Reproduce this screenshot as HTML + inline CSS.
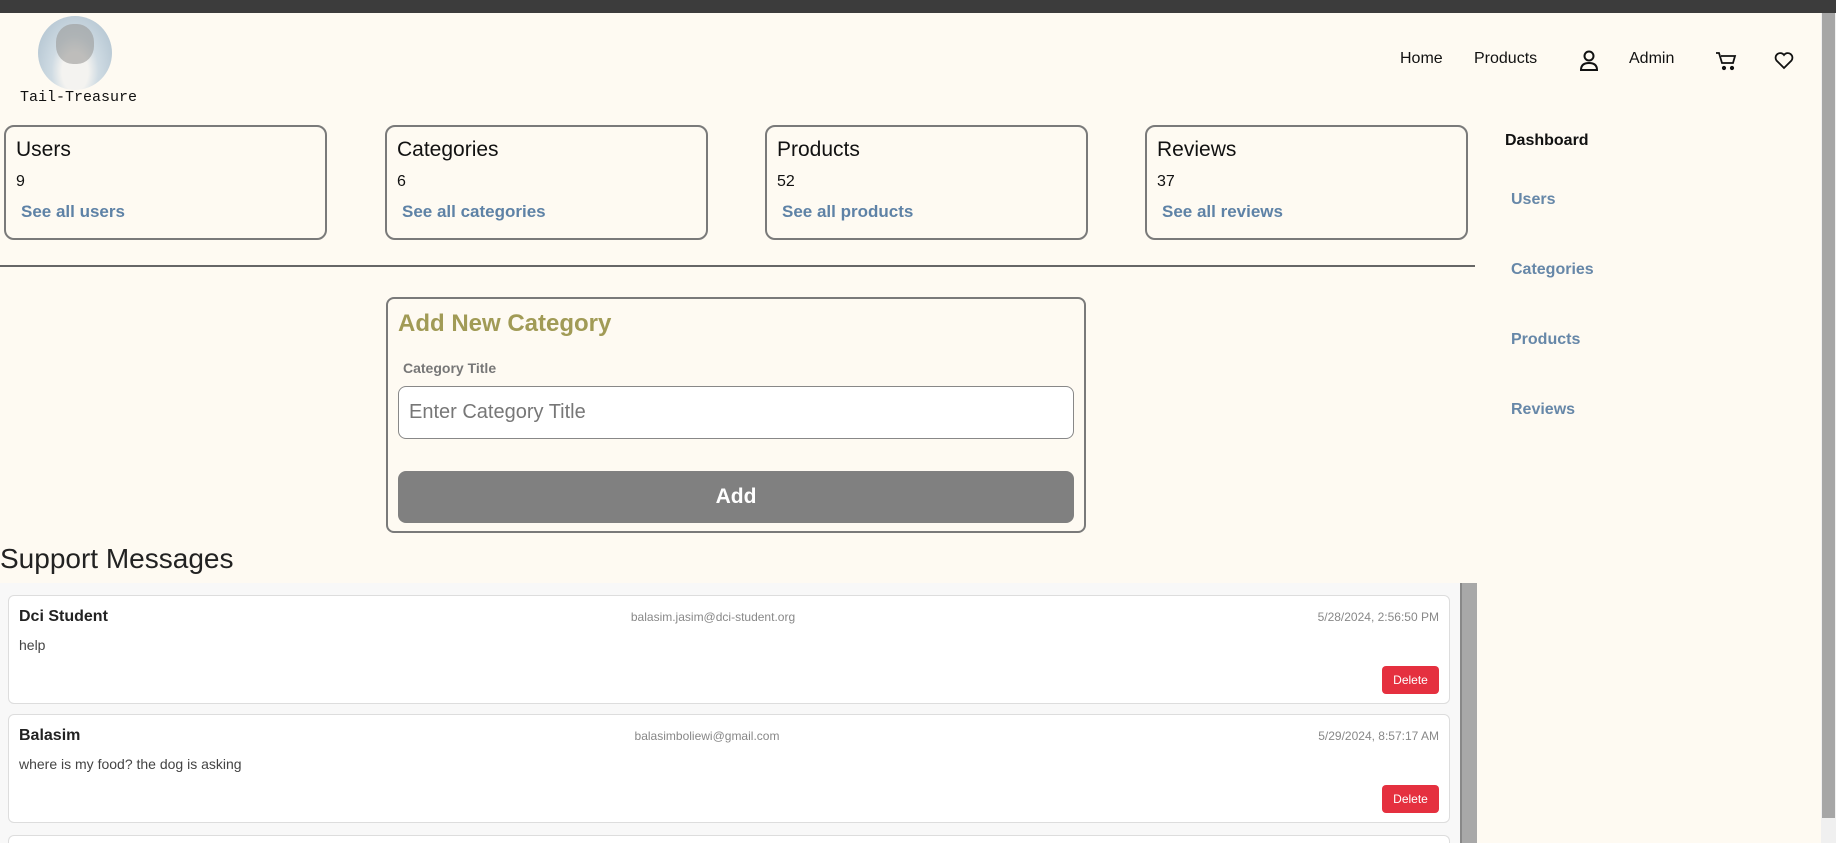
<!DOCTYPE html>
<html><head><meta charset="utf-8"><style>
*{box-sizing:border-box;margin:0;padding:0}
html,body{width:1836px;height:843px;overflow:hidden}
body{background:#fefaf2;font-family:"Liberation Sans",sans-serif;color:#111}
#w{position:relative;width:1836px;height:843px;overflow:hidden}
.abs{position:absolute}
.topbar{left:0;top:0;width:1836px;height:13px;background:#3c3c3c}
.sb{left:1821px;top:13px;width:15px;height:830px;background:#f0f0f0}
.sbt{left:1822px;top:13px;width:13px;height:805px;background:#a6a6a6}
.nav{font-size:16px;top:50px}
.card{border:2px solid #7a7a7a;border-radius:10px;top:125px;height:115px;width:323px}
.card h3{position:absolute;left:10px;top:11px;font-size:21px;font-weight:normal}
.card .n{position:absolute;left:10px;top:46px;font-size:16px}
.card a{position:absolute;left:15px;top:75px;font-size:17px;color:#5e82a6;text-decoration:none;font-weight:bold}
.side{color:#6687a8;font-weight:bold;font-size:16px;left:1511px}
.msg{left:8px;width:1442px;height:109px;background:#fff;border:1px solid #ddd;border-radius:6px}
.msg .nm{position:absolute;left:10px;top:12px;font-weight:bold;font-size:16px;color:#222}
.msg .em{position:absolute;top:14px;font-size:12px;color:#888;width:300px;text-align:center}
.msg .dt{position:absolute;right:10px;top:14px;font-size:12px;color:#888}
.msg .tx{position:absolute;left:10px;top:41px;font-size:14px;color:#444}
.msg .del{position:absolute;right:10px;top:70px;width:57px;height:28px;background:#e5303f;border-radius:4px;color:#fff;font-size:12px;text-align:center;line-height:28px}
</style></head><body><div id="w">
<div class="abs topbar"></div>
<div class="abs" style="left:38px;top:16px;width:74px;height:74px;border-radius:50%;background:radial-gradient(ellipse at 50% 75%,#f4f3f0 0 25%,#cfdbe3 45%,#aabdcb 100%)"></div>
<div class="abs" style="left:56px;top:24px;width:38px;height:40px;border-radius:45%;background:#9a9a98;opacity:.6"></div>
<div class="abs" style="left:20px;top:89px;font-family:'Liberation Mono',monospace;font-size:15px">Tail-Treasure</div>
<div class="abs nav" style="left:1400px">Home</div>
<div class="abs nav" style="left:1474px">Products</div>
<svg class="abs" style="left:1579px;top:50px" width="20" height="22" viewBox="0 0 20 22" fill="none" stroke="#111" stroke-width="2"><circle cx="10" cy="6" r="4.5"/><path d="M2 20c0-5 3-7 8-7s8 2 8 7z"/></svg>
<div class="abs nav" style="left:1629px">Admin</div>
<svg class="abs" style="left:1715px;top:51px" width="22" height="20" viewBox="0 0 22 20" fill="none" stroke="#111" stroke-width="1.8"><path d="M1 2h3l3 10h11l2-7H6"/><circle cx="9" cy="17" r="1.2" fill="#111"/><circle cx="17" cy="17" r="1.2" fill="#111"/></svg>
<svg class="abs" style="left:1774px;top:52px" width="20" height="18" viewBox="0 0 20 18" fill="none" stroke="#111" stroke-width="1.8"><path d="M10 16L2.5 8.5A4.3 4.3 0 0 1 10 3a4.3 4.3 0 0 1 7.5 5.5z"/></svg>

<div class="abs card" style="left:4px"><h3>Users</h3><div class="n">9</div><a>See all users</a></div>
<div class="abs card" style="left:385px"><h3>Categories</h3><div class="n">6</div><a>See all categories</a></div>
<div class="abs card" style="left:765px"><h3>Products</h3><div class="n">52</div><a>See all products</a></div>
<div class="abs card" style="left:1145px"><h3>Reviews</h3><div class="n">37</div><a>See all reviews</a></div>

<div class="abs" style="left:1505px;top:132px;font-weight:bold;font-size:16px">Dashboard</div>
<div class="abs side" style="top:191px">Users</div>
<div class="abs side" style="top:261px">Categories</div>
<div class="abs side" style="top:331px">Products</div>
<div class="abs side" style="top:401px">Reviews</div>

<div class="abs" style="left:0;top:265px;width:1475px;height:2px;background:#666"></div>

<div class="abs" style="left:386px;top:297px;width:700px;height:236px;border:2px solid #7a7a7a;border-radius:8px">
<div class="abs" style="left:10px;top:11px;font-size:24px;font-weight:bold;color:#a19b56">Add New Category</div>
<div class="abs" style="left:15px;top:61px;font-size:14px;font-weight:bold;color:#777">Category Title</div>
<div class="abs" style="left:10px;top:87px;width:676px;height:53px;border:1px solid #888;border-radius:8px;background:#fff;font-size:20px;color:#777;padding:14px 10px">Enter Category Title</div>
<div class="abs" style="left:10px;top:172px;width:676px;height:52px;border-radius:8px;background:#808080;color:#fff;font-weight:bold;font-size:21px;text-align:center;line-height:52px">Add</div>
</div>

<div class="abs" style="left:0;top:543px;font-size:28px;color:#222">Support Messages</div>
<div class="abs" style="left:0;top:583px;width:1460px;height:260px;background:#f8f8f8"></div>
<div class="abs" style="left:1460px;top:583px;width:17px;height:260px;background:#a8a8a8;border-left:2px solid #888"></div>
<div class="abs msg" style="top:595px"><div class="nm">Dci Student</div><div class="em" style="left:554px">balasim.jasim@dci-student.org</div><div class="dt">5/28/2024, 2:56:50 PM</div><div class="tx">help</div><div class="del">Delete</div></div>
<div class="abs msg" style="top:714px"><div class="nm">Balasim</div><div class="em" style="left:548px">balasimboliewi@gmail.com</div><div class="dt">5/29/2024, 8:57:17 AM</div><div class="tx">where is my food? the dog is asking</div><div class="del">Delete</div></div>
<div class="abs msg" style="top:835px;height:8px;border-bottom:none;border-radius:6px 6px 0 0"></div>

<div class="abs sb"></div><div class="abs sbt"></div>
</div></body></html>
